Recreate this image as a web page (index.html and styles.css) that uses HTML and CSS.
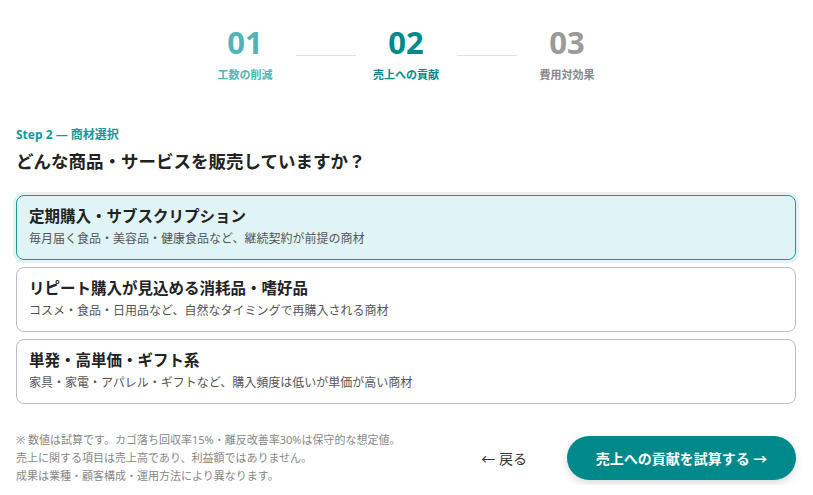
FILE: index.html
```html
<!DOCTYPE html>
<html lang="ja">
<head>
    <meta charset="UTF-8">
    <meta name="viewport" content="width=device-width, initial-scale=1.0">
    <title>売上への貢献</title>
    <link rel="stylesheet" href="styles.css">
</head>
<body>

    <div class="stepper">
        <div class="step done">
            <div class="step-num">01</div>
            <div class="step-label">工数の削減</div>
        </div>
        <div class="step-line"></div>
        <div class="step current">
            <div class="step-num">02</div>
            <div class="step-label">売上への貢献</div>
        </div>
        <div class="step-line"></div>
        <div class="step">
            <div class="step-num">03</div>
            <div class="step-label">費用対効果</div>
        </div>
    </div>

    <p class="step-caption">Step 2 ― 商材選択</p>
    <h2 class="question">どんな商品・サービスを販売していますか？</h2>

    <div class="options">
        <div class="option selected">
            <div class="option-title">定期購入・サブスクリプション</div>
            <div class="option-desc">毎月届く食品・美容品・健康食品など、継続契約が前提の商材</div>
        </div>
        <div class="option">
            <div class="option-title">リピート購入が見込める消耗品・嗜好品</div>
            <div class="option-desc">コスメ・食品・日用品など、自然なタイミングで再購入される商材</div>
        </div>
        <div class="option">
            <div class="option-title">単発・高単価・ギフト系</div>
            <div class="option-desc">家具・家電・アパレル・ギフトなど、購入頻度は低いが単価が高い商材</div>
        </div>
    </div>

    <div class="footer">
        <p class="notes">※ 数値は試算です。カゴ落ち回収率15%・離反改善率30%は保守的な想定値。<br>売上に関する項目は売上高であり、利益額ではありません。<br>成果は業種・顧客構成・運用方法により異なります。</p>
        <button class="back-btn">← 戻る</button>
        <button class="next-btn">売上への貢献を試算する →</button>
    </div>

</body>
</html>
```

FILE: styles.css
```css
body {
    font-family: "Noto Sans", "Noto Sans CJK JP", sans-serif;
    margin: 0;
    padding: 22px 17px 0 16px;
    color: #222;
    background: #fff;
}
.stepper {
    display: flex;
    justify-content: center;
    align-items: flex-start;
}
.step {
    width: 85px;
    text-align: center;
}
.step-num {
    font-size: 31px;
    font-weight: bold;
    line-height: 40px;
    color: #9a9a9a;
}
.step-label {
    font-size: 11px;
    font-weight: bold;
    margin-top: 4px;
    color: #888;
}
.step.done .step-num, .step.done .step-label {
    color: #52b5b5;
}
.step.current .step-num, .step.current .step-label {
    color: #00898a;
}
.step-line {
    width: 60px;
    height: 1px;
    background: #e2e2e2;
    margin: 33px 8px 0;
}
.step-caption {
    margin: 43px 0 0;
    font-size: 12px;
    font-weight: bold;
    color: #12999a;
}
.question {
    margin: 5px 0 0;
    font-size: 17.5px;
    font-weight: bold;
}
.options {
    display: flex;
    flex-direction: column;
    gap: 7px;
    margin-top: 22px;
}
.option {
    border: 1px solid #bdbdbd;
    border-radius: 8px;
    padding: 10px 12px 11px;
    height: 42px;
}
.option.selected {
    background: #e0f4f5;
    border: 1.5px solid #1b9b9b;
    box-shadow: 0 0 0 3px rgba(27, 155, 155, 0.12);
}
.option-title {
    font-size: 15.5px;
    font-weight: bold;
    line-height: 21px;
}
.option-desc {
    font-size: 12px;
    color: #555;
    margin-top: 3px;
    line-height: 18px;
}
.footer {
    display: flex;
    align-items: center;
    margin-top: 27px;
}
.notes {
    margin: 0;
    font-size: 11px;
    color: #888;
    line-height: 18px;
    flex: 1;
}
.back-btn {
    background: none;
    border: none;
    font-family: inherit;
    font-size: 14px;
    color: #333;
    cursor: pointer;
    margin-right: 40px;
    padding: 0;
}
.next-btn {
    background: #00898a;
    color: white;
    border: none;
    border-radius: 22px;
    height: 44px;
    width: 229px;
    font-family: inherit;
    font-size: 14px;
    font-weight: bold;
    cursor: pointer;
    box-shadow: 0 3px 8px rgba(0, 0, 0, 0.15);
}
```
